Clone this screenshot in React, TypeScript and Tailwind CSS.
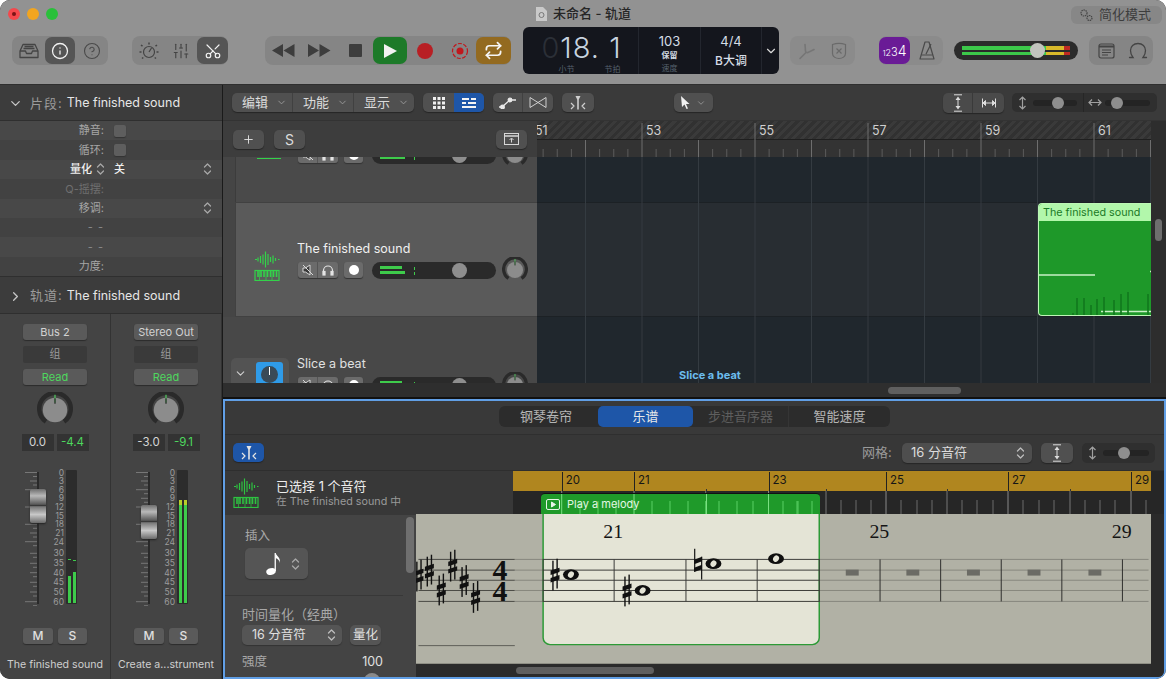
import React from "react";
import { ChevronDown, ChevronRight, Info, CircleHelp, Scissors, SlidersVertical, Repeat, Plus } from "lucide-react";

const UpDown = ({ c = "#bdbdbd", h = 14 }: { c?: string; h?: number }) => (
  <svg width="9" height={h} viewBox="0 0 9 14" fill="none" stroke={c} strokeWidth="1.3" strokeLinecap="round" strokeLinejoin="round">
    <path d="M1.5 5 L4.5 2 L7.5 5" />
    <path d="M1.5 9 L4.5 12 L7.5 9" />
  </svg>
);

const TrackIcon = ({ c = "#33d24a" }: { c?: string }) => (
  <svg width="26" height="30" viewBox="0 0 26 30" fill="none" stroke={c} strokeWidth="1.200">
    <path d="M1 8.5h2M4 6.5v4M6.5 5v7M9 3.5v10M11.5 .5v16M14 3v11M16.500 6v5M19 4.500v8M21.500 7v3M24 8.500h1.500" />
    <rect x="1" y="19.500" width="24" height="10" />
    <path d="M4 20v6M7 20v6M10 20v6M13.500 20v6M16.500 20v6M19.500 20v6M22.500 20v6" strokeWidth="1.600" />
    <path d="M5.500 20v9M12 20v9M18 20v9" strokeWidth=".7" />
  </svg>
);

const CatchIcon = ({ c = "#ddd" }: { c?: string }) => (
  <svg width="18" height="15" viewBox="0 0 18 15" fill="none" stroke={c} strokeWidth="1.200" strokeLinejoin="round">
    <path d="M6.500 1h5l-1.700 3.500v10h-1.600v-10z" fill={c} stroke="none" />
    <path d="M2 8l3 3-3 3M16 8l-3 3 3 3" />
  </svg>
);

const Knob = ({ size = 26, inner = 0.72, face = "#8c8c8c", tick = "#2f2f2f" }: { size?: number; inner?: number; face?: string; tick?: string }) => (
  <svg width={size} height={size} viewBox="0 0 40 40">
    <path d="M10 33 A 17.500 17.500 0 1 1 30 33" fill="none" stroke="#2a2a2a" strokeWidth="5" />
    <circle cx="20" cy="20" r={20 * inner} fill={face} />
    <path d="M20 3v9" stroke="#4ec45c" strokeWidth="1.400" />
    <path d="M20 7v6" stroke={tick} strokeWidth="1.500" />
  </svg>
);

function Group({ w, children, tone = "bg-[#858585]" }: { w: string; children: React.ReactNode; tone?: string }) {
  return <div className={`${w} ${tone} h-[29px] rounded-[8px] flex items-center`}>{children}</div>;
}

function TopBar() {
  return (
    <div className="h-[85px] shrink-0 bg-[#929292] border-b border-[#2f2f2f] flex flex-col">
      <div className="h-[27px] relative flex items-center justify-center">
        <div className="absolute left-[8px] top-[8px] flex gap-[7px]">
          <div className="w-[12px] h-[12px] rounded-full bg-[#f4484c] flex items-center justify-center"><div className="w-[4px] h-[4px] rounded-full bg-[#7a1416]" /></div>
          <div className="w-[12px] h-[12px] rounded-full bg-[#f2a51f]" />
          <div className="w-[12px] h-[12px] rounded-full bg-[#29c03a]" />
        </div>
        <div className="flex items-center gap-[6px] mt-[1px]">
          <svg width="12" height="14" viewBox="0 0 12 14"><path d="M1 0h7l4 4v10H1z" fill="#c9c9c9" /><circle cx="6.500" cy="8" r="2.500" fill="none" stroke="#777" /></svg>
          <span className="text-[13px] font-medium text-[#262626]">未命名 - 轨道</span>
        </div>
        <div className="absolute left-[1071px] top-[6px] w-[91px] h-[18px] rounded-[6px] bg-[#878787] flex items-center gap-[6px] pl-[8px]">
          <svg width="14" height="14" viewBox="0 0 14 14" fill="none" stroke="#444" strokeWidth="1.200"><circle cx="5" cy="5" r="3" strokeDasharray="1.500 .7" /><circle cx="10.500" cy="10" r="2.500" strokeDasharray="1.500 .7" /></svg>
          <span className="text-[13px] text-[#3d3d3d]">简化模式</span>
        </div>
      </div>
      <div className="h-[47px] flex items-center pl-[12px] text-[#3f3f3f]">
        <Group w="w-[96px]">
          <div className="w-[33px] flex justify-center">
            <svg width="20" height="16" viewBox="0 0 20 16" fill="none" stroke="#444" strokeWidth="1.300" strokeLinejoin="round"><path d="M1 8l3-6.500h12L19 8v6.500H1z" /><path d="M1 8h5.500l1 2.500h5l1-2.500H19M4.500 5.500h11M5.500 3.500h9" /></svg>
          </div>
          <div className="w-[30px] h-[27px] rounded-[7px] bg-[#555555] flex items-center justify-center"><Info size={18} color="#f2f2f2" strokeWidth={1.700} /></div>
          <div className="w-[33px] flex justify-center"><CircleHelp size={18} color="#4a4a4a" strokeWidth={1.500} /></div>
        </Group>
        <div className="w-[24px]" />
        <Group w="w-[96px]">
          <div className="w-[33px] flex justify-center">
            <svg width="20" height="20" viewBox="0 0 20 20" fill="none" stroke="#444" strokeWidth="1.200"><circle cx="10" cy="11" r="5.500" /><path d="M10 11l2.500-4" /><path d="M10 1.500v2M2 4l1.500 1.200M18 4l-1.500 1.200M.5 11h2M17.500 11h2M3 17.500l1.300-1M17 17.500l-1.300-1" strokeWidth="1.500" /></svg>
          </div>
          <div className="w-[32px] flex justify-center"><SlidersVertical size={18} color="#444" strokeWidth={1.500} /></div>
          <div className="w-[31px] h-[27px] rounded-[7px] bg-[#555555] flex items-center justify-center"><Scissors size={18} color="#f2f2f2" strokeWidth={1.600} className="-rotate-90" /></div>
        </Group>
        <div className="w-[37px]" />
        <Group w="w-[246px]">
          <div className="w-[36px] flex justify-center"><svg width="23" height="13" viewBox="0 0 23 13" fill="#3d3d3d"><path d="M11 0v13L0 6.500zM22.500 0v13L11.500 6.500z" /></svg></div>
          <div className="w-[36px] flex justify-center"><svg width="23" height="13" viewBox="0 0 23 13" fill="#3d3d3d"><path d="M0 0v13l11-6.500zM11.500 0v13l11-6.500z" /></svg></div>
          <div className="w-[36px] flex justify-center"><div className="w-[13px] h-[13px] rounded-[1px] bg-[#3d3d3d]" /></div>
          <div className="w-[34px] h-[27px] rounded-[7px] bg-[#1d7a29] flex items-center justify-center"><svg width="13" height="14" viewBox="0 0 13 14" fill="#f2f2f2"><path d="M0 0l13 7-13 7z" /></svg></div>
          <div className="w-[36px] flex justify-center"><div className="w-[16px] h-[16px] rounded-full bg-[#b81f24]" /></div>
          <div className="w-[33px] flex justify-center">
            <svg width="18" height="18" viewBox="0 0 18 18"><circle cx="9" cy="9" r="7.500" fill="none" stroke="#c0181d" strokeWidth="1.200" strokeDasharray="4 1.500" /><circle cx="9" cy="9" r="3.500" fill="#c0181d" /></svg>
          </div>
          <div className="w-[35px] h-[27px] rounded-[7px] bg-[#936a20] flex items-center justify-center"><Repeat size={19} color="#f5f5f5" strokeWidth={2.200} /></div>
        </Group>
        <div className="w-[12px]" />
        <div className="w-[256px] h-[47px] rounded-[6px] bg-[#14161d] flex items-stretch text-[#d5dde6]">
          <div className="w-[116px] border-r border-[#23262e] flex flex-col items-center">
            <div className="h-[34px] mt-[3px] flex items-center text-[29px] font-light leading-none pl-[2px]">
              <span className="text-[#2b2f37] mr-[1px]">0</span>
              <span className="text-[#c7d3df] tracking-[1px]">18. 1</span>
            </div>
            <div className="flex gap-[30px] text-[8px] text-[#55606c] leading-[10px] pl-[18px]"><span>小节</span><span>节拍</span></div>
          </div>
          <div className="w-[62px] border-r border-[#23262e] flex flex-col items-center pt-[6px]">
            <span className="text-[13px] leading-[16px]">103</span>
            <span className="text-[8px] leading-[14px] mt-[-1px] font-bold">保留</span>
            <span className="text-[8px] text-[#55606c] leading-[12px]">速度</span>
          </div>
          <div className="w-[61px] border-r border-[#23262e] flex flex-col items-center pt-[6px]">
            <span className="text-[13px] leading-[16px]">4/4</span>
            <span className="text-[12px] leading-[18px] mt-[3px] font-medium">B大调</span>
          </div>
          <div className="w-[17px] flex items-center justify-center"><ChevronDown size={14} color="#d8d8d8" strokeWidth={2} /></div>
        </div>
        <div className="w-[11px]" />
        <Group w="w-[65px]" tone="bg-[#8b8b8b]">
          <div className="w-[33px] flex justify-center"><svg width="18" height="18" viewBox="0 0 18 18" fill="none" stroke="#767676" strokeWidth="1.600" strokeLinecap="round"><path d="M2 16.500l6-6M7 2.500l.5 6.500q.2 2 2.500 1.500l6-3" /></svg></div>
          <div className="w-[32px] flex justify-center"><svg width="16" height="18" viewBox="0 0 16 18" fill="none" stroke="#6a6a6a" strokeWidth="1.200"><path d="M1.500 2.500c4-1.500 9-1.500 13 0v9c0 3-3 5-6.500 5s-6.500-2-6.500-5z" /><path d="M5.500 6.500l5 5M10.500 6.500l-5 5" /></svg></div>
        </Group>
        <div className="w-[24px]" />
        <Group w="w-[64px]" tone="bg-[#8b8b8b]">
          <div className="w-[31px] h-[27px] rounded-[7px] bg-[#6a1b96] flex items-baseline justify-center text-white font-light leading-none pt-[7px] ml-[0px]">
            <span className="text-[8px]">1</span><span className="text-[9px]">2</span><span className="text-[11px]">3</span><span className="text-[14px]">4</span>
          </div>
          <div className="flex-1 flex justify-center"><svg width="18" height="19" viewBox="0 0 18 19" fill="none" stroke="#4a4a4a" strokeWidth="1.200" strokeLinejoin="round"><path d="M7 1h4l5 17H2z" /><path d="M3.500 14h11M8 13L13 3" /></svg></div>
        </Group>
        <div className="w-[11px]" />
        <div className="w-[124px] h-[19px] rounded-full bg-[#2b2b2b] relative flex flex-col justify-center gap-[2px] px-[8px]">
          <div className="h-[4px] flex"><div className="w-[84px] bg-[#3cc84a]" /><div className="w-[18px] bg-[#d9b92a]" /><div className="w-[6px] bg-[#bf2a22]" /></div>
          <div className="h-[3.500px] flex"><div className="w-[84px] bg-[#3cc84a]" /><div className="w-[18px] bg-[#d9b92a]" /><div className="w-[6px] bg-[#bf2a22]" /></div>
          <div className="absolute left-[76px] top-[2px] w-[15px] h-[15px] rounded-full bg-[#c2c4be]" />
        </div>
        <div className="w-[11px]" />
        <Group w="w-[64px]">
          <div className="w-[34px] flex justify-center"><svg width="17" height="16" viewBox="0 0 17 16" fill="none" stroke="#444" strokeWidth="1.200"><rect x="1" y="1" width="15" height="14" rx="2" /><path d="M1 3.500h15" strokeWidth="2" /><path d="M4 7h9M4 9.500h9M4 12h6" /></svg></div>
          <div className="w-[30px] flex justify-center"><svg width="20" height="17" viewBox="0 0 20 17" fill="none" stroke="#444" strokeWidth="1.300" strokeLinecap="round"><path d="M1.500 15.500h3.500C3 13 2.500 11 2.500 8.500c0-4 3-7 7.500-7s7.500 3 7.500 7c0 2.500-.5 4.500-2.500 7h3.500" /></svg></div>
        </Group>
      </div>
    </div>
  );
}

const meterScale: [string, number][] = [["0", 2.5], ["3", 11], ["6", 19.7], ["9", 28.3], ["12", 37], ["15", 45.7], ["18", 54.3], ["21", 63], ["24", 71.7], ["30", 83.3], ["35", 93.3], ["40", 102.7], ["45", 112.3], ["50", 122], ["60", 131.700]];

function Strip({ bus, pan, vol, capTop, bars, name, peakDash, hot }: { bus: string; pan: string; vol: string; capTop: number; bars: number[]; name: string; peakDash?: boolean; hot?: boolean }) {
  return (
    <div className="w-[111px] shrink-0 flex flex-col items-center border-r border-[#333] pt-[10px]">
      <div className="w-[64px] h-[16px] rounded-[3px] bg-[#5a5a5a] shadow-[0_1px_1px_#2c2c2c] text-[11px] leading-[16px] text-center text-[#d2d2d2]">{bus}</div>
      <div className="w-[64px] h-[17px] mt-[6px] rounded-[2px] bg-[#3a3a3a] text-[11px] leading-[17px] text-center text-[#9a9a9a]">组</div>
      <div className="w-[64px] h-[16px] mt-[6px] rounded-[3px] bg-[#5a5a5a] shadow-[0_1px_1px_#2c2c2c] text-[11px] leading-[16px] text-center text-[#4ed85e]">Read</div>
      <div className="mt-[7px] h-[36px]"><Knob size={36} inner={0.68} /></div>
      <div className="mt-[6px] flex gap-[3px] text-[11.500px] leading-[17px] text-center">
        <div className="w-[32px] h-[17px] bg-[#333333] text-[#d5d5d5]">{pan}</div>
        <div className="w-[32px] h-[17px] bg-[#333333] text-[#4ed85e]">{vol}</div>
      </div>
      <div className="mt-[19px] h-[136px] w-[64px] flex">
        <div className="w-[22px] h-[136px] relative shrink-0">
          <svg width="22" height="136" className="absolute left-0 top-0" fill="none">
            <rect x="14" y="2" width="2" height="132" fill="#2a2a2a" />
            {meterScale.map(([l, y]) => (
              <path key={l} d={`M${["0", "6", "12", "18", "24", "60"].includes(l) ? 2 : 7} ${y}H14M10 ${y + 4}H14`} stroke="#777" strokeWidth="1" />
            ))}
          </svg>
          <div className="absolute left-[7px] w-[16px] h-[34px] rounded-[2px] shadow-[0_1px_2px_#222] bg-[linear-gradient(180deg,#6e6e6e_0%,#b9b9b9_20%,#5a5a5a_45%,#333_49%,#777_52%,#c8c8c8_75%,#6a6a6a_100%)]" style={{ top: capTop }} />
        </div>
        <div className="w-[21px] h-[136px] relative shrink-0 text-[8.500px] text-[#9c9c9c]">
          {meterScale.map(([l, y]) => (
            <span key={l} className="absolute right-[2px] leading-[8px]" style={{ top: y - 4 }}>{l}</span>
          ))}
        </div>
        <div className="w-[11px] h-[134px] rounded-[1px] bg-[#2c2c2c] relative shrink-0">
          {bars.map((top, i) => (
            <div key={i} className="absolute bottom-[1px] w-[3px] bg-[#3ecb4b] overflow-hidden" style={{ left: i === 0 ? 2 : 6.500, top }}>
              {hot && <div className="h-[5px] bg-[#b7cf2a]" />}
            </div>
          ))}
          {peakDash && <><div className="absolute left-[2px] top-[89px] w-[3px] h-[1px] bg-[#3ecb4b]" /><div className="absolute left-[6.500px] top-[90px] w-[3px] h-[1px] bg-[#3ecb4b]" /></>}
        </div>
      </div>
      <div className="mt-[22px] flex gap-[5px]">
        <div className="w-[30px] h-[16px] rounded-[3px] bg-[#5a5a5a] shadow-[0_1px_1px_#2c2c2c] text-[12px] leading-[16px] font-medium text-center text-[#e0e0e0]">M</div>
        <div className="w-[29px] h-[16px] rounded-[3px] bg-[#5a5a5a] shadow-[0_1px_1px_#2c2c2c] text-[12px] leading-[16px] font-medium text-center text-[#e0e0e0]">S</div>
      </div>
      <div className="mt-[13px] text-[10.600px] leading-[16px] text-[#cfcfcf] whitespace-nowrap">{name}</div>
    </div>
  );
}

function Inspector() {
  const rows: { l?: string; tone?: string; right?: boolean; mid?: React.ReactNode }[] = [
    { l: "静音:", mid: <div className="w-[12px] h-[12px] rounded-[2px] bg-[#5e5e5e] shadow-[0_1px_1px_#333]" /> },
    { l: "循环:", mid: <div className="w-[12px] h-[12px] rounded-[2px] bg-[#5e5e5e] shadow-[0_1px_1px_#333]" /> },
    { l: "量化", tone: "text-[#f0f0f0] font-medium", mid: <span className="text-[11px] text-[#f0f0f0] font-medium">关</span>, right: true },
    { l: "Q-摇摆:", tone: "text-[#6f6f6f]" },
    { l: "移调:", right: true },
    { l: "- -", tone: "text-[#8a8a8a] tracking-[1px]" },
    { l: "- -", tone: "text-[#8a8a8a] tracking-[1px]" },
    { l: "力度:" },
  ];
  return (
    <div className="w-[222px] shrink-0 flex flex-col bg-[#444444]">
      <div className="h-[36px] flex items-center bg-[#3c3c3c] border-b border-[#2f2f2f] pl-[8px] pt-[2px] text-[12.500px]">
        <ChevronDown size={15} color="#c8c8c8" strokeWidth={2} />
        <span className="text-[#9b9b9b] ml-[7px] text-[13px] tracking-[1px]">片段:</span>
        <span className="text-[#e6e6e6] ml-[4px]">The finished sound</span>
      </div>
      <div className="h-[155px] flex flex-col">
        {rows.map((r, i) => (
          <div key={i} className={`h-[19.375px] flex items-center ${i % 2 ? "bg-[#424242]" : "bg-[#484848]"}`}>
            <div className={`w-[104px] text-right text-[11px] ${r.tone ?? "text-[#a6a6a6]"} ${r.l === "量化" ? "pr-[12px] relative" : ""}`}>
              {r.l}
              {r.l === "量化" && <span className="absolute right-[-1px] top-[1px]"><UpDown c="#a8a8a8" /></span>}
            </div>
            <div className="ml-[10px] flex-1 flex items-center">{r.mid}</div>
            {r.right && <div className="mr-[10px] flex"><UpDown c="#a8a8a8" /></div>}
          </div>
        ))}
      </div>
      <div className="h-[38px] flex items-center bg-[#3c3c3c] border-y border-[#2f2f2f] pl-[8px] pt-[2px] text-[12.500px]">
        <ChevronRight size={15} color="#c8c8c8" strokeWidth={2} />
        <span className="text-[#9b9b9b] ml-[7px] text-[13px] tracking-[1px]">轨道:</span>
        <span className="text-[#e6e6e6] ml-[4px]">The finished sound</span>
      </div>
      <div className="flex-1 flex min-h-0">
        <Strip bus="Bus 2" pan="0.0" vol="-4.4" capTop={19} bars={[106, 102]} peakDash name="The finished sound" />
        <Strip bus="Stereo Out" pan="-3.0" vol="-9.1" capTop={35} bars={[30, 30]} hot name="Create a...strument" />
      </div>
    </div>
  );
}

function Btn({ className, children }: { className: string; children?: React.ReactNode }) {
  return <div className={`bg-[#505050] shadow-[0_1px_1px_#262626] flex items-center justify-center text-[#dcdcdc] ${className}`}>{children}</div>;
}

function MiniSlider({ icon, w, knob }: { icon: React.ReactNode; w: number; knob: number }) {
  return (
    <div className="flex items-center h-full">
      <div className="w-[21px] flex justify-center">{icon}</div>
      <div className="h-[6px] rounded-full bg-[#242424] relative" style={{ width: w }}>
        <div className="absolute top-[-3px] w-[12px] h-[12px] rounded-full bg-[#8e8e8e]" style={{ left: knob }} />
      </div>
    </div>
  );
}

const VArrow = () => (
  <svg width="9" height="14" viewBox="0 0 9 14" fill="none" stroke="#a0a0a0" strokeWidth="1.200"><path d="M4.500 1v12M1.500 4l3-3 3 3M1.500 10l3 3 3-3" /></svg>
);
const HArrow = () => (
  <svg width="14" height="9" viewBox="0 0 14 9" fill="none" stroke="#a0a0a0" strokeWidth="1.200"><path d="M1 4.500h12M4 1.500l-3 3 3 3M10 1.500l3 3-3 3" /></svg>
);
const FitV = () => (
  <svg width="10" height="18" viewBox="0 0 10 18" fill="#dcdcdc" stroke="#dcdcdc" strokeWidth="1"><path d="M1 .8h8M1 17.200h8" fill="none" /><path d="M2.500 6L5 2.500 7.500 6zM2.500 12L5 15.500 7.500 12z" stroke="none" /><path d="M5 5v8" /></svg>
);

function ArrangeToolbar() {
  return (
    <div className="h-[36px] shrink-0 bg-[#3a3a3a] border-b border-[#333] flex items-center pl-[9px] text-[13px]">
      <div className="flex w-[182px] h-[19px] rounded-[5px] overflow-hidden shadow-[0_1px_1px_#262626] bg-[#505050] text-[#dcdcdc]">
        {["编辑", "功能", "显示"].map((t, i) => (
          <div key={t} className={`flex-1 flex items-center pl-[10px] gap-[8px] ${i < 2 ? "border-r border-[#414141]" : ""}`}>
            <span>{t}</span>
            <ChevronDown size={11} color="#9a9a9a" strokeWidth={2} />
          </div>
        ))}
      </div>
      <div className="ml-[9px] flex w-[61px] h-[19px] rounded-[5px] overflow-hidden shadow-[0_1px_1px_#262626] bg-[#505050]">
        <div className="w-[31px] flex items-center justify-center">
          <svg width="12" height="12" viewBox="0 0 12 12" fill="#f0f0f0">{[0, 4.500, 9].flatMap((y) => [0, 4.500, 9].map((x) => <rect key={`${x}-${y}`} x={x} y={y} width="3" height="3" />))}</svg>
        </div>
        <div className="flex-1 bg-[#1e56a8] flex items-center justify-center">
          <svg width="14" height="10" viewBox="0 0 14 10" fill="#f4f4f4"><path d="M0 0h7v2H0zM9 0h5v2H9zM0 4h4v2H0zM6 4h8v2H6zM0 8h14v2H0z" /></svg>
        </div>
      </div>
      <div className="ml-[9px] flex w-[60px] h-[19px] rounded-[5px] overflow-hidden shadow-[0_1px_1px_#262626] bg-[#505050]">
        <div className="w-[30px] border-r border-[#414141] flex items-center justify-center">
          <svg width="18" height="12" viewBox="0 0 18 12" fill="none" stroke="#e8e8e8" strokeWidth="1.300"><path d="M0 10h3l8-7h6" /><circle cx="3.500" cy="10" r="1.800" fill="#e8e8e8" /><circle cx="11" cy="3" r="1.800" fill="#e8e8e8" /></svg>
        </div>
        <div className="flex-1 flex items-center justify-center">
          <svg width="18" height="11" viewBox="0 0 18 11" fill="none" stroke="#cfcfcf" strokeWidth="1"><path d="M1 .5v10L9 5.500zM17 .5v10L9 5.500z" /></svg>
        </div>
      </div>
      <Btn className="ml-[9px] w-[32px] h-[19px] rounded-[5px]"><CatchIcon c="#cfcfcf" /></Btn>
      <Btn className="ml-[80px] w-[39px] h-[19px] rounded-[5px] gap-[6px]">
        <svg width="9" height="13" viewBox="0 0 9 13" fill="#f0f0f0"><path d="M0 0l8.500 8H5l2 4.500-1.500.5-2-4.500L1 11z" /></svg>
        <ChevronDown size={10} color="#9a9a9a" strokeWidth={2} />
      </Btn>
      <div className="ml-[230px] flex w-[61px] h-[20px] rounded-[5px] overflow-hidden shadow-[0_1px_1px_#262626] bg-[#4a4a4a]">
        <div className="w-[30px] border-r border-[#3a3a3a] flex items-center justify-center"><FitV /></div>
        <div className="flex-1 flex items-center justify-center">
          <svg width="14" height="10" viewBox="0 0 14 10" fill="#dcdcdc" stroke="#dcdcdc"><path d="M.5 .5v9M13.500 .5v9" fill="none" /><path d="M3.500 2.500L1 5l2.500 2.500zM10.500 2.500L13 5l-2.500 2.500zM3 5h8" /></svg>
        </div>
      </div>
      <div className="ml-[8px] w-[145px] h-[19px] rounded-[5px] bg-[#2f2f2f] flex items-center">
        <MiniSlider icon={<VArrow />} w={44} knob={19} />
        <div className="w-[1px] h-[19px] bg-[#262626] ml-[6px]" />
        <MiniSlider icon={<HArrow />} w={45} knob={6} />
      </div>
    </div>
  );
}

function TrackControls() {
  return (
    <div className="flex items-center h-[26px]">
      <div className="flex w-[40px] h-[16px] rounded-[3px] overflow-hidden bg-[#6b6b6b] shadow-[0_1px_1px_#333] ml-[1px]">
        <div className="w-[20px] border-r border-[#555] flex items-center justify-center">
          <svg width="12" height="12" viewBox="0 0 12 12" fill="#3a3a3a" stroke="#d8d8d8" strokeWidth="1"><path d="M1 4h2.500L8 1v10L3.500 8H1z" /><path d="M1 1l10 10" /></svg>
        </div>
        <div className="flex-1 flex items-center justify-center">
          <svg width="12" height="12" viewBox="0 0 12 12" fill="none" stroke="#e4e4e4" strokeWidth="1.200"><path d="M1.500 10V6.500a4.500 4.500 0 0 1 9 0V10" /><rect x="1" y="7.500" width="2" height="3.500" fill="#e4e4e4" /><rect x="9" y="7.500" width="2" height="3.500" fill="#e4e4e4" /></svg>
        </div>
      </div>
      <div className="ml-[6px] w-[19px] h-[16px] rounded-[3px] bg-[#6b6b6b] shadow-[0_1px_1px_#333] flex items-center justify-center">
        <div className="w-[10px] h-[10px] rounded-full bg-white" />
      </div>
      <div className="ml-[9px] w-[124px] h-[17px] rounded-full bg-[#2a2a2a] relative flex flex-col justify-center gap-[2px] pl-[8px]">
        <div className="h-[3px] w-[22px] bg-[#3ecb4b]" />
        <div className="h-[3px] w-[25px] bg-[#3ecb4b]" />
        <div className="absolute left-[42px] top-[5px] w-[1px] h-[8px] border-l border-dashed border-[#3ecb4b]" />
        <div className="absolute left-[80px] top-[1px] w-[15px] h-[15px] rounded-full bg-[#8e8e8e]" />
      </div>
      <div className="ml-[6px]"><Knob size={26} inner={0.62} /></div>
    </div>
  );
}

function TrackHeaders() {
  return (
    <div className="w-[314px] shrink-0 flex flex-col">
      <div className="h-[36px] bg-[#3d3d3d] flex items-center pl-[10px] relative z-10">
        <Btn className="w-[31px] h-[19px] rounded-[5px]"><Plus size={13} color="#e4e4e4" strokeWidth={1.700} /></Btn>
        <Btn className="ml-[10px] w-[31px] h-[19px] rounded-[5px] text-[14px]">S</Btn>
        <Btn className="ml-[191px] w-[31px] h-[19px] rounded-[5px]">
          <svg width="15" height="12" viewBox="0 0 15 12" fill="none" stroke="#d8d8d8" strokeWidth="1"><rect x=".5" y=".5" width="14" height="11" /><path d="M.5 3h14" strokeWidth="1.500" /><path d="M7.500 9.500v-4M5.500 7l2-2 2 2" /></svg>
        </Btn>
      </div>
      <div className="h-[45px] bg-[#454545] pl-[12px] overflow-hidden">
        <div className="h-full bg-[#4a4a4a] border-l border-[#3c3c3c] flex overflow-hidden">
          <div className="w-[61px] shrink-0"><div className="w-[24px] h-[1px] mt-[1px] ml-[21px] bg-[#33d24a]" /></div>
          <div className="mt-[-15px]"><TrackControls /></div>
        </div>
      </div>
      <div className="h-[115px] bg-[#454545] pl-[12px]">
        <div className="h-full bg-[#5a5a5a] border-y border-l border-[#414141] flex">
          <div className="w-[61px] flex justify-center items-center pt-[12px]"><TrackIcon /></div>
          <div className="pt-[37px]">
            <div className="text-[12.500px] leading-[18px] text-[#f0f0f0]">The finished sound</div>
            <div className="mt-[-1px]"><TrackControls /></div>
          </div>
        </div>
      </div>
      <div className="h-[66px] bg-[#484848] overflow-hidden flex pl-[8px]">
        <div className="w-[58px] h-[30px] mt-[41px] bg-[#535353] rounded-[5px] flex items-start pt-[4px] pl-[3px] gap-[9px]">
          <ChevronDown size={13} color="#d0d0d0" strokeWidth={2} className="mt-[5px]" />
          <div className="w-[27px] h-[24px] rounded-[3px] bg-[#2f9be8] flex items-center justify-center"><div className="w-[17px] h-[17px] rounded-full bg-[#3a4a57] flex justify-center"><div className="w-[1px] h-[8px] bg-white mt-[1px]" /></div></div>
        </div>
        <div className="ml-[8px] pt-[38px]">
          <div className="text-[12.500px] leading-[18px] text-[#e0e0e0]">Slice a beat</div>
          <div className="mt-[-1px]"><TrackControls /></div>
        </div>
      </div>
    </div>
  );
}

const bars = [53, 55, 57, 59, 61];
function barX(n: number) { return (n - 51) * 56.5 - 8; }

function Timeline() {
  const ticks: number[] = [];
  for (let i = 0; i < 48; i++) ticks.push(-8 + i * 14.125);
  return (
    <div className="w-[614px] shrink-0 flex flex-col relative overflow-hidden">
      <div className="h-[36px] shrink-0 relative bg-[#333333]">
        <div className="h-[19px] border-b border-[#1f1f1f] bg-[repeating-linear-gradient(135deg,#3a3a3a_0px,#3a3a3a_3px,#313131_3px,#313131_6px)] relative" />
        <svg width="614" height="36" className="absolute left-0 top-0" fill="none">
          {ticks.map((x, i) => {
            const bar = i % 4 === 0;
            const odd = i % 8 === 0;
            return <path key={i} d={`M${x} ${odd ? 2 : bar ? 19 : 28}V36`} stroke={bar ? "#6e6e6e" : "#5c5c5c"} strokeWidth="1" />;
          })}
        </svg>
        <span className="absolute left-[-2px] top-[2px] text-[12.500px] leading-[16px] text-[#cfcfcf]">51</span>
        {bars.map((b) => (
          <span key={b} className="absolute top-[2px] text-[12.500px] leading-[16px] text-[#cfcfcf]" style={{ left: barX(b) + 4 }}>{b}</span>
        ))}
      </div>
      <div className="h-[45px] bg-[#20272d]" />
      <div className="h-[115px] bg-[#282d32] border-y border-[#1c2125]" />
      <div className="h-[66px] bg-[#20272d] relative">
        <span className="absolute left-[142px] top-[51px] text-[11px] font-bold text-[#6bbcec] leading-[14px] z-10">Slice a beat</span>
      </div>
      <svg width="614" height="226" className="absolute left-0 top-[36px]" fill="none">
        {ticks.filter((_, i) => i % 4 === 0).map((x) => <path key={x} d={`M${x} 0V226`} stroke="#343b41" strokeWidth="1" />)}
      </svg>
      <div className="absolute left-[501px] top-[82px] w-[120px] h-[113px] rounded-l-[4px] overflow-hidden flex flex-col bg-[#1e9829] border-l border-y border-[#bdf7b6]">
        <div className="h-[17px] shrink-0 bg-[#b2f7ab] text-[10.750px] leading-[17px] pl-[4px] text-[#1b7a27]">The finished sound</div>
        <svg width="120" height="95" fill="none">
          <path d="M0 54H56" stroke="#c9f0c6" strokeWidth="1.500" />
          <path d="M62 90.500H120" stroke="#c9f0c6" strokeWidth="1.500" />
          <path d="M111 50.500h2" stroke="#c9f0c6" strokeWidth="1.500" />
          {[[34, 92], [38, 77], [45, 77], [52, 84], [58, 78], [65, 76], [75, 79], [82, 73], [89, 71], [109, 73]].map(([x, y]) => (
            <path key={x} d={`M${x} ${y}V95`} stroke="#127a1e" strokeWidth="1.700" />
          ))}
        </svg>
      </div>
    </div>
  );
}

const rulerBars: [number, number][] = [[20, 561.7], [21, 634], [23, 768.5], [25, 886], [27, 1008], [29, 1131]];
const rulerTicks = [580, 598, 616, 652, 670, 688, 719, 737, 753, 783, 798, 812, 841, 856, 871, 901, 917, 932, 962, 977, 993, 1023, 1039, 1054, 1085, 1100, 1115, 1146];
const rulerMinor = [705.7, 826, 947, 1070];
const greenTicks = [580, 598, 616, 652, 670, 688, 705.7, 719, 737, 753, 783, 798];

function EditorRuler() {
  return (
    <div className="w-[638px] shrink-0 relative">
      <div className="h-[20px] bg-[#b0861f] relative">
        {rulerBars.map(([n, x]) => (
          <span key={n} className="absolute top-[1px] text-[11.500px] leading-[17px] text-[#161616] border-l border-[#222] pl-[3px] h-[19px]" style={{ left: x - 513 }}>{n}</span>
        ))}
        {rulerMinor.map((x) => <div key={x} className="absolute bottom-0 w-[1px] h-[2px] bg-[#333]" style={{ left: x - 513 }} />)}
      </div>
      <div className="h-[23px] bg-[#262626] relative overflow-hidden">
        <svg width="638" height="23" fill="none" className="absolute left-0 top-0">
          {rulerBars.map(([n, x]) => <path key={n} d={`M${x - 513} 0V23`} stroke="#888" strokeWidth="1" />)}
          {rulerMinor.map((x) => <path key={x} d={`M${x - 513} 0V23`} stroke="#777" strokeWidth="1" />)}
          {rulerTicks.map((x) => <path key={x} d={`M${x - 513} 9V23`} stroke="#6a6a6a" strokeWidth="1" />)}
        </svg>
      </div>
      <div className="absolute left-[28px] top-[22px] w-[279px] h-[21px] rounded-t-[4px] bg-[#1f9a2a] overflow-hidden flex items-center pl-[5px] border-t border-[#111]">
        <svg width="14" height="11" viewBox="0 0 14 11" fill="none" stroke="#e8f6e8" strokeWidth="1"><rect x=".5" y=".5" width="13" height="10" rx="1.500" /><path d="M5.500 3v5l4-2.500z" fill="#e8f6e8" /></svg>
        <span className="ml-[7px] text-[11px] text-[#e4f6e4] leading-[14px] relative z-10">Play a melody</span>
        <svg width="279" height="21" className="absolute left-0 top-0" fill="none">
          {greenTicks.map((x) => <path key={x} d={`M${x - 541} 7V21`} stroke="#5bd064" strokeWidth="1" />)}
          {[20.7, 93, 165.5, 227.5].map((x) => <path key={x} d={`M${x} 0V21`} stroke="#7be082" strokeWidth="1" />)}
          {[256, 271].map((x) => <path key={x} d={`M${x} 7V21`} stroke="#5bd064" strokeWidth="1" />)}
        </svg>
      </div>
    </div>
  );
}

const Sharp = ({ x, y }: { x: number; y: number }) => (
  <g fill="#111" stroke="none">
    <rect x={x - 2.8} y={y - 14} width="1.400" height="30" />
    <rect x={x + 1.4} y={y - 16} width="1.400" height="30" />
    <path d={`M${x - 4.5} ${y - 4}L${x + 4.500} ${y - 7}V${y - 2.500}L${x - 4.500} ${y + 0.500}Z`} />
    <path d={`M${x - 4.5} ${y + 3.500}L${x + 4.500} ${y + 0.500}V${y + 5}L${x - 4.500} ${y + 8}Z`} />
  </g>
);
const Natural = ({ x, y }: { x: number; y: number }) => (
  <g fill="#111" stroke="none">
    <rect x={x - 4} y={y - 15} width="1.200" height="23" />
    <rect x={x + 3} y={y - 7} width="1.200" height="23" />
    <path d={`M${x - 4} ${y - 4}L${x + 4} ${y - 7}V${y - 2.500}L${x - 4} ${y + 0.500}Z`} />
    <path d={`M${x - 4} ${y + 4}L${x + 4} ${y + 1}V${y + 5.500}L${x - 4} ${y + 8.500}Z`} />
  </g>
);
const WholeNote = ({ x, y }: { x: number; y: number }) => (
  <g>
    <ellipse cx={x} cy={y} rx="8" ry="5.400" fill="#0f0f0f" />
    <ellipse cx={x} cy={y} rx="3.400" ry="2.800" fill="#e4e4d6" transform={`rotate(-55 ${x} ${y})`} />
  </g>
);

function Score() {
  const staff = [559.7, 570.5, 580.7, 591, 602];
  const rests = [852.7, 913.7, 974.7, 1035.7, 1097];
  return (
    <svg width="735" height="150" viewBox="416 514 735 150" className="block bg-[#b1b1a5] border-b border-[#8f8f85]">
      <rect x="541.5" y="505" width="278" height="140.500" rx="7" fill="#e4e4d6" stroke="#2c9a36" strokeWidth="1.500" />
      {staff.map((y) => <path key={y} d={`M416 ${y}H513`} stroke="#4a4a45" strokeWidth="1" />)}
      {staff.map((y) => <path key={y} d={`M513 ${y}H541M820 ${y}H1151`} stroke="#87877e" strokeWidth="1" />)}
      {staff.map((y) => <path key={y} d={`M541 ${y}H820`} stroke="#3c3c38" strokeWidth="1" />)}
      {[541.5, 613, 685.3, 757, 819.5, 880.7, 941.7, 1002.7, 1063.7, 1124.7].map((x) => (
        <path key={x} d={`M${x} 559.700V602`} stroke={x < 820 ? "#3a3a38" : "#2e2e2c"} strokeWidth="1" />
      ))}
      <path d="M416 646.500H513" stroke="#5f5f59" strokeWidth="1" />
      <Sharp x={416.5} y={576} />
      <Sharp x={427} y={571} />
      <Sharp x={439} y={590} />
      <Sharp x={450.500} y={566} />
      <Sharp x={462} y={581.500} />
      <Sharp x={473.500} y={597.500} />
      <text x="498" y="580.500" textAnchor="middle" fontFamily="'Liberation Serif', serif" fontWeight="700" fontSize="30" fill="#111">4</text>
      <text x="498" y="602" textAnchor="middle" fontFamily="'Liberation Serif', serif" fontWeight="700" fontSize="30" fill="#111">4</text>
      <Sharp x={553.500} y={575} />
      <WholeNote x={569.500} y={575} />
      <Sharp x={626} y={591} />
      <WholeNote x={641.700} y={591} />
      <Natural x={697.500} y={564} />
      <WholeNote x={713} y={564} />
      <WholeNote x={776} y={559} />
      {rests.map((x) => <rect key={x} x={x - 6.500} y="570" width="13" height="6" fill="#6b6b65" />)}
      {[["21", 612], ["25", 880], ["29", 1124]].map(([t, x]) => (
        <text key={t} x={x} y="538" textAnchor="middle" fontFamily="'Liberation Serif', serif" fontSize="20" fill="#141414">{t}</text>
      ))}
    </svg>
  );
}

function Editor() {
  return (
    <div className="flex-1 min-h-0 border-2 border-[#619fe6] rounded-br-[8px] flex flex-col bg-[#383838] overflow-hidden">
      <div className="h-[34px] shrink-0 bg-[#393939] border-b border-[#2f2f2f] flex items-center justify-center pb-[3px]">
        <div className="w-[391px] h-[21px] rounded-[6px] bg-[#2c2c2c] flex text-[13px]">
          <div className="w-[99px] pr-[5px] text-center leading-[21px] text-[#b5b5b5]">钢琴卷帘</div>
          <div className="w-[95px] text-center leading-[21px] rounded-[5px] bg-[#1e56a8] text-[#e8e8e8]">乐谱</div>
          <div className="w-[96px] text-center leading-[21px] text-[#5e5e5e] border-r border-[#353535]">步进音序器</div>
          <div className="w-[101px] text-center leading-[21px] text-[#b5b5b5]">智能速度</div>
        </div>
      </div>
      <div className="h-[36px] shrink-0 bg-[#373737] border-b border-[#2e2e2e] flex items-center pl-[8px] text-[13px]">
        <div className="w-[31px] h-[19px] rounded-[5px] bg-[#1e56a8] flex items-center justify-center shadow-[0_1px_1px_#262626]"><CatchIcon c="#e4e4e4" /></div>
        <span className="ml-[598px] w-[40px] text-[#9a9a9a]">网格:</span>
        <div className="w-[130px] h-[20px] rounded-[5px] bg-[#4e4e4e] shadow-[0_1px_1px_#262626] flex items-center justify-between pl-[9px] pr-[7px] text-[#dcdcdc]">
          <span>16 分音符</span>
          <UpDown c="#bdbdbd" />
        </div>
        <Btn className="ml-[9px] w-[32px] h-[20px] rounded-[5px]"><FitV /></Btn>
        <div className="ml-[9px] w-[73px] h-[20px] rounded-[5px] bg-[#2f2f2f] flex items-center">
          <MiniSlider icon={<VArrow />} w={46} knob={15} />
        </div>
      </div>
      <div className="h-[43px] shrink-0 flex bg-[#383838]">
        <div className="w-[288px] shrink-0 flex items-center pl-[8px]">
          <TrackIcon c="#2ec241" />
          <div className="ml-[17px] flex flex-col pt-[1px]">
            <span className="text-[13px] leading-[16px] text-[#ededed]">已选择 1 个音符</span>
            <span className="text-[10.750px] leading-[15px] text-[#9a9a9a]">在 The finished sound 中</span>
          </div>
        </div>
        <EditorRuler />
        <div className="flex-1 bg-[#262626]" />
      </div>
      <div className="flex-1 min-h-0 flex">
        <div className="w-[191px] shrink-0 bg-[#444444] relative overflow-hidden border-t border-[#383838]">
          <div className="absolute left-[181px] top-[2px] w-[8px] h-[56px] rounded-full bg-[#6f6f6f]" />
          <div className="h-[81px] border-b border-[#383838] mr-[13px] pl-[20px] pt-[12px]">
            <div className="text-[12.500px] leading-[17px] text-[#a8a8a8]">插入</div>
            <div className="mt-[4px] w-[63px] h-[31px] rounded-[5px] bg-[#555555] shadow-[0_1px_1px_#333] flex items-center justify-center gap-[10px] pl-[12px]">
              <svg width="15" height="22" viewBox="0 0 15 22" fill="#fff"><ellipse cx="5" cy="18.500" rx="4.800" ry="3.300" transform="rotate(-15 5 18.500)" /><rect x="8.600" y="0" width="1.300" height="18" /><path d="M9.500 0c1 3 5 4 4.500 10-.5-2.500-2-4-4.500-5z" /></svg>
              <UpDown c="#a8a8a8" />
            </div>
          </div>
          <div className="pl-[17px] pt-[10px] pr-[34px]">
            <div className="text-[13px] leading-[17px] text-[#a8a8a8] whitespace-nowrap">时间量化（经典）</div>
            <div className="mt-[2px] flex gap-[8px]">
              <div className="w-[100px] h-[20px] rounded-[5px] bg-[#555555] shadow-[0_1px_1px_#333] flex items-center justify-between pl-[10px] pr-[6px] text-[12.500px] text-[#e0e0e0]">
                <span>16 分音符</span><UpDown c="#bdbdbd" />
              </div>
              <div className="w-[31px] h-[20px] rounded-[5px] bg-[#555555] shadow-[0_1px_1px_#333] text-[12.500px] leading-[20px] text-center text-[#e0e0e0]">量化</div>
            </div>
            <div className="mt-[8px] flex justify-between text-[12.500px] leading-[17px]">
              <span className="text-[#a8a8a8]">强度</span>
              <span className="text-[#e0e0e0] mr-[-1px]">100</span>
            </div>
            <div className="w-[16px] h-[16px] rounded-full bg-[#8a8a8a] ml-[122px] mt-[3px]" />
          </div>
        </div>
        <div className="w-[735px] shrink-0 flex flex-col">
          <Score />
          <div className="flex-1 bg-[#2b2b2b] relative">
            <div className="absolute left-[100px] top-[3px] w-[138px] h-[7px] rounded-full bg-[#5f5f5f]" />
          </div>
        </div>
        <div className="flex-1 bg-[#2a2a2a]" />
      </div>
    </div>
  );
}

export default function App() {
  return (
    <div className="w-[1166px] h-[679px] overflow-hidden rounded-[10px] flex flex-col bg-[#1d1d1d] font-['Inter','Noto_Sans_CJK_SC',sans-serif] antialiased">
      <TopBar />
      <div className="flex-1 min-h-0 flex">
        <Inspector />
        <div className="w-[1px] shrink-0 bg-[#1a1a1a]" />
        <div className="flex-1 min-w-0 flex flex-col">
          <ArrangeToolbar />
          <div className="h-[262px] shrink-0 flex">
            <TrackHeaders />
            <Timeline />
            <div className="flex-1 bg-[#2d2d2d] relative">
              <div className="absolute left-[4px] top-[98px] w-[7px] h-[22px] rounded-full bg-[#6e6e6e]" />
            </div>
          </div>
          <div className="h-[14px] shrink-0 bg-[#2e2e2e] relative">
            <div className="absolute left-[665px] top-[4px] w-[73px] h-[7px] rounded-full bg-[#5f5f5f]" />
          </div>
          <div className="h-[2px] shrink-0 bg-[#111]" />
          <Editor />
        </div>
      </div>
    </div>
  );
}
